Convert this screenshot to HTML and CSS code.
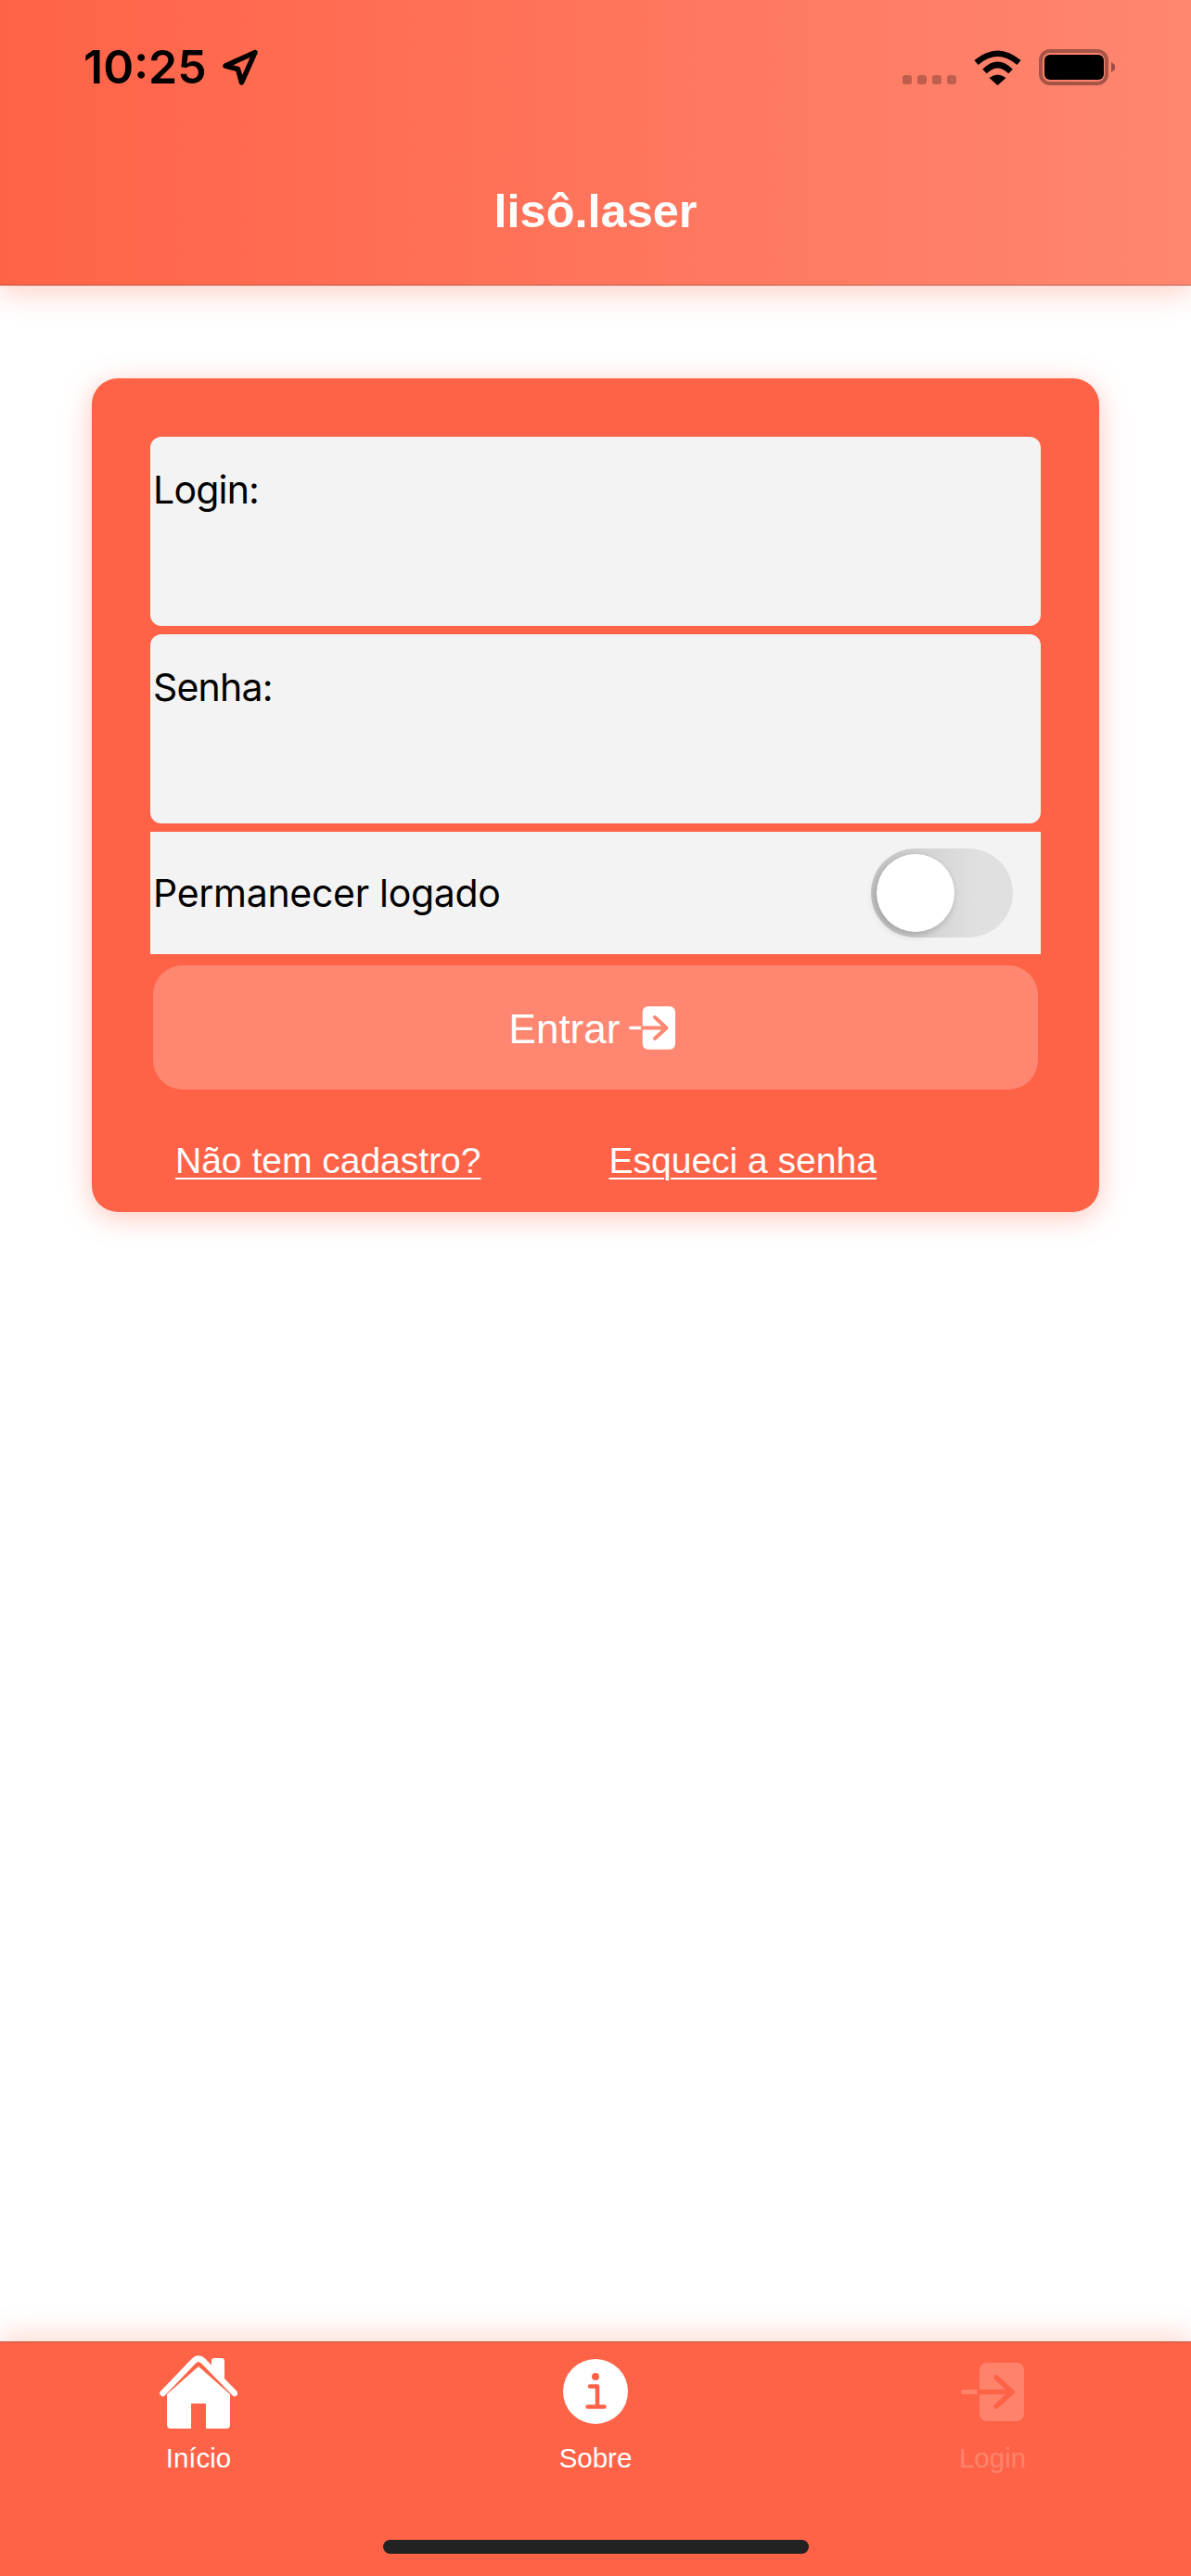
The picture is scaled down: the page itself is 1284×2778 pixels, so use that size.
FILE: index.html
```html
<!DOCTYPE html>
<html lang="pt">
<head>
<meta charset="utf-8">
<title>lisô.laser</title>
<link rel="stylesheet" href="styles.css">
</head>
<body>
<div class="app">
  <header class="header">
    <div class="status">
      <div class="status-left">
        <span class="time">10:25</span>
        <svg class="loc" width="39" height="39" viewBox="0 0 39 39"><path d="M4 18 L36 3.500 L21.500 36 L17.500 21.500 Z"/></svg>
      </div>
      <div class="status-right">
        <div class="signal"><i></i><i></i><i></i><i></i></div>
        <svg class="wifi" width="51" height="38" viewBox="0 0 51 38"><path class="wifi-arc" d="M2.500 13.500 Q25.500 -6 48.500 13.500"/><path class="wifi-arc" d="M11.500 23 Q25.500 9 39.500 23"/><path d="M16.500 30 Q25.500 23 34.500 30 L25.500 38 Z"/></svg>
        <svg class="battery" width="82" height="39" viewBox="0 0 82 39"><rect class="batt-ring" x="2" y="2" width="71" height="35" rx="10"/><rect x="6" y="6" width="64" height="27" rx="6"/><path class="batt-nub" d="M78 14 L82 17 V22 L78 25 Z"/></svg>
      </div>
    </div>
    <h1 class="title">lisô.laser</h1>
  </header>

  <main class="main">
    <section class="card">
      <div class="field"><span class="label">Login:</span></div>
      <div class="field"><span class="label">Senha:</span></div>
      <div class="stay">
        <span class="stay-label">Permanecer logado</span>
        <div class="toggle"><div class="thumb"></div></div>
      </div>
      <button class="submit" type="button">
        <span class="submit-text">Entrar</span>
        <svg class="enter enter-small" viewBox="0 0 68 63"><rect class="enter-door" x="20" y="0" width="48" height="63" rx="8"/><path class="enter-tail" d="M2.500 31.500 H20"/><path class="enter-arrow" d="M20 31.500 H55 M38 16 L55 31.500 L38 47"/></svg>
      </button>
      <div class="links">
        <a class="link" href="#">Não tem cadastro?</a>
        <a class="link" href="#">Esqueci a senha</a>
      </div>
    </section>
  </main>

  <nav class="tabbar">
    <div class="tabs">
      <a class="tab" href="#">
        <span class="tab-icon">
          <svg width="84" height="79" viewBox="0 0 84 79"><path class="home-fill" d="M42 12 L76 42 V75 a4 4 0 0 1 -4 4 H50 V52 H34 V79 H12 a4 4 0 0 1 -4 -4 V42 Z"/><path class="home-fill" d="M56 15 V6 a3 3 0 0 1 3 -3 h8 a3 3 0 0 1 3 3 V28 Z"/><path class="home-roof" d="M3.500 41 L37 6 Q42 1.500 47 6 L81 41"/></svg>
        </span>
        <span class="tab-label">Início</span>
      </a>
      <a class="tab" href="#">
        <span class="tab-icon">
          <svg width="70" height="70" viewBox="-35 -35 70 70"><circle class="home-fill" r="35"/><circle class="info-dot" cy="-16" r="4"/><path class="info-stroke" d="M-6 -5.500 H2 V16 M-8.500 16.500 H9.500"/></svg>
        </span>
        <span class="tab-label">Sobre</span>
      </a>
      <a class="tab tab-off" href="#">
        <span class="tab-icon">
          <svg class="enter" width="68" height="63" viewBox="0 0 68 63"><rect class="enter-door" x="20" y="0" width="48" height="63" rx="8"/><path class="enter-tail" d="M2.500 31.500 H20"/><path class="enter-arrow" d="M20 31.500 H55 M38 16 L55 31.500 L38 47"/></svg>
        </span>
        <span class="tab-label">Login</span>
      </a>
    </div>
    <div class="home-bar"></div>
  </nav>
</div>
</body>
</html>
```

FILE: styles.css
```css
* { box-sizing: border-box; }
html, body { margin: 0; padding: 0; }
body { background: #fff; font-family: "Liberation Sans", Arial, sans-serif; }
a { color: inherit; }

.app { width: 1284px; height: 2778px; display: flex; flex-direction: column; overflow: hidden; }

.header {
  height: 308px;
  padding-top: 53px;
  background: linear-gradient(90deg, #ff6347 0%, #ff8670 100%);
  border-bottom: 1px solid rgba(150, 70, 55, 0.55);
  box-shadow: 0 8px 28px rgba(255, 99, 71, 0.3);
  position: relative;
  z-index: 1;
}
.status { display: flex; justify-content: space-between; height: 39px; padding: 0 82px 0 90px; }
.status-left { display: flex; align-items: center; gap: 16px; }
.time { font-family: Inter, sans-serif; font-weight: 600; font-size: 50px; line-height: 39px; color: #000; }
.loc path { fill: none; stroke: #000; stroke-width: 5.5; stroke-linejoin: round; }
.status-right { display: flex; align-items: flex-end; gap: 19px; }
.signal { display: flex; gap: 6px; padding-bottom: 1px; }
.signal i { display: block; width: 10px; height: 10px; border-radius: 3px; background: rgba(0, 0, 0, 0.25); }
.wifi-arc { fill: none; stroke: #000; stroke-width: 6.500; }
.batt-ring { fill: none; stroke: rgba(0, 0, 0, 0.35); stroke-width: 4; }
.batt-nub { fill: rgba(0, 0, 0, 0.4); }
.title { margin: 106px 0 0; text-align: center; font-size: 50.500px; line-height: 60px; font-weight: 700; color: #fff; }

.main { flex: 1; padding: 100px 99px 0; }
.card {
  background: #ff6347;
  border-radius: 28px;
  padding: 63px 63px 32px;
  display: flex;
  flex-direction: column;
  box-shadow: 0 6px 30px rgba(255, 99, 71, 0.36);
}
.field { height: 204px; margin-bottom: 9px; padding: 32px 0 0 3px; background: #f3f3f4; border-radius: 12px; }
.label, .stay-label { font-family: Inter, sans-serif; font-size: 41px; letter-spacing: -0.3px; line-height: 50px; color: #000; display: block; }
.label { letter-spacing: -0.8px; }
.stay { height: 132px; padding: 0 30px 0 3px; background: #f3f3f4; display: flex; align-items: center; justify-content: space-between; }
.toggle {
  width: 153px; height: 96px; border-radius: 48px; padding-left: 6px;
  display: flex; align-items: center;
  background: linear-gradient(90deg, #c6c6c6 0%, #d6d6d6 45%, #e0e0e0 75%);
}
.thumb { width: 84px; height: 84px; border-radius: 50%; background: #fff; box-shadow: -2px 3px 8px rgba(0, 0, 0, 0.22); }
.submit {
  margin: 12px 3px 0; height: 134px; border: 0; border-radius: 32px; background: #ff8671;
  display: flex; align-items: center; justify-content: center; gap: 10px; padding: 0 7px 0 0;
  font-family: inherit; color: #fff;
}
.submit-text { font-size: 44px; line-height: 50px; padding-top: 3px; }
.enter-small { width: 50px; height: 47px; }
.enter-door { fill: #fff; }
.enter-tail { fill: none; stroke: #fff; stroke-width: 5; stroke-linecap: round; }
.enter-arrow { fill: none; stroke: #ff8671; stroke-width: 5.500; stroke-linecap: round; stroke-linejoin: round; }
.links { display: flex; gap: 138px; margin-top: 54px; padding-left: 27px; }
.link { font-size: 39px; line-height: 46px; color: #fff; text-decoration: underline; text-decoration-thickness: 2px; text-underline-offset: 5px; }

.tabbar {
  height: 253px;
  background: #ff6347;
  border-top: 1px solid rgba(150, 70, 55, 0.55);
  box-shadow: 0 -8px 28px rgba(255, 99, 71, 0.24);
  display: flex;
  flex-direction: column;
  align-items: center;
}
.tabs { width: 100%; display: grid; grid-template-columns: repeat(3, 1fr); }
.tab { display: flex; flex-direction: column; align-items: center; text-decoration: none; color: #fff; padding-top: 13px; }
.tab-icon { height: 80px; display: flex; align-items: center; justify-content: center; }
.tab-label { margin-top: 15px; font-size: 29.500px; line-height: 34px; }
.tab-off .tab-label { opacity: 0.2; }
.tab-off .enter-door, .tab-off .enter-tail { opacity: 0.2; }
.tab-off .enter-arrow { stroke: #ff6347; }
.home-fill { fill: #fff; }
.home-roof { fill: none; stroke: #fff; stroke-width: 6.500; stroke-linecap: round; stroke-linejoin: round; }
.info-dot { fill: #ff6347; }
.info-stroke { fill: none; stroke: #ff6347; stroke-width: 4.500; stroke-linecap: round; stroke-linejoin: round; }
.home-bar { width: 459px; height: 15px; border-radius: 8px; background: #222; margin-top: auto; margin-bottom: 24px; }
```
